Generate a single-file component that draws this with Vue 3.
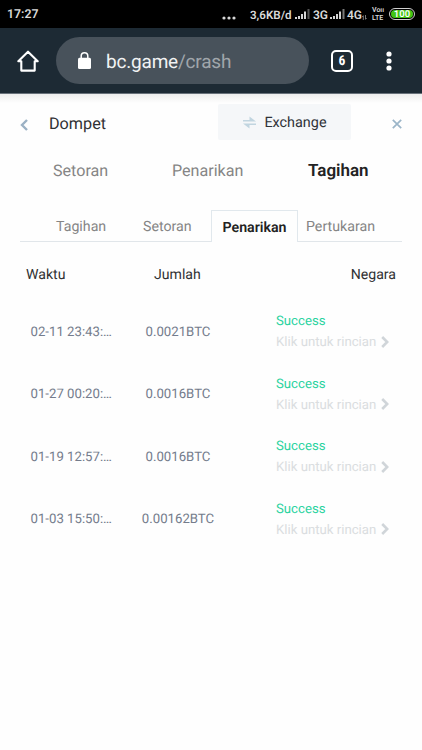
<script setup>
const mainTabs = ['Setoran', 'Penarikan', 'Tagihan']
const subTabs = ['Tagihan', 'Setoran', 'Penarikan', 'Pertukaran']
const rows = [
  { time: '02-11 23:43:…', amount: '0.0021BTC' },
  { time: '01-27 00:20:…', amount: '0.0016BTC' },
  { time: '01-19 12:57:…', amount: '0.0016BTC' },
  { time: '01-03 15:50:…', amount: '0.00162BTC' },
]
</script>

<template>
  <div class="screen">
    <div class="status">
      <span class="clock">17:27</span>
      <svg class="dots" width="14" height="4" viewBox="0 0 14 4" fill="#d8d8d8">
        <circle cx="2" cy="2" r="1.6" /><circle cx="7" cy="2" r="1.6" /><circle cx="12" cy="2" r="1.6" />
      </svg>
      <span class="speed">3,6KB/d</span>
      <svg class="signal" width="15" height="12" viewBox="0 0 15 12" fill="#d4d4d4">
        <path d="M0 9h2v2H0zM3 8h2v3H3zM6 6h2v5H6zM9 3.5h2V11H9z" /><path d="M12.5 1h2v10h-2z" fill="#555" />
      </svg>
      <span class="net3">3G</span>
      <svg class="signal" width="15" height="12" viewBox="0 0 15 12" fill="#d4d4d4">
        <path d="M0 9h2v2H0zM3 8h2v3H3zM6 6h2v5H6zM9 3.5h2V11H9z" /><path d="M12.5 1h2v10h-2z" fill="#777" />
      </svg>
      <span class="net4">4G</span>
      <svg class="data" width="5" height="5" viewBox="0 0 5 5" fill="none" stroke="#999" stroke-width=".8">
        <path d="M1.3 5V.7L.2 2M3.5 0v4.3L4.7 3" />
      </svg>
      <span class="volte"><span>Voıı</span><span>LTE</span></span>
      <span class="battery"><span>100</span></span>
    </div>

    <div class="toolbar">
      <svg class="home" width="22" height="22" viewBox="0 0 22 22" fill="none" stroke="#fff" stroke-width="2.1" stroke-linejoin="round" stroke-linecap="round">
        <path d="M1.3 11.2 11 1.7l9.7 9.5h-3V20.6H4.3v-9.4z" />
      </svg>
      <div class="address">
        <svg width="13" height="17" viewBox="0 0 13 17">
          <path d="M3.2 7V4.1a3.3 3.3 0 0 1 6.6 0V7" fill="none" stroke="#fff" stroke-width="1.5" />
          <rect y="5.7" width="13" height="11.2" rx="1.5" fill="#fff" />
        </svg>
        <span class="url">bc.game<span>/crash</span></span>
      </div>
      <span class="tabcount">6</span>
      <svg class="more" width="6" height="20" viewBox="0 0 6 20" fill="#fff">
        <circle cx="3" cy="3" r="2.6" /><circle cx="3" cy="10" r="2.6" /><circle cx="3" cy="17" r="2.6" />
      </svg>
    </div>

    <main class="page">
      <header class="head">
        <svg class="back" width="8" height="12" viewBox="0 0 8 12" fill="none" stroke="#9bb1c4" stroke-width="2.4">
          <path d="M7 1 2 6l5 5" />
        </svg>
        <span class="title">Dompet</span>
        <div class="exchange">
          <svg width="13" height="13" viewBox="0 0 13 13" fill="#c1d5e0">
            <path d="M0 4h6.5V.5L13 5.4H0zM13 8.9H6.5v3.6L0 7.5h13z" />
          </svg>
          <span>Exchange</span>
        </div>
        <svg class="close" width="10" height="10" viewBox="0 0 10 10" fill="none" stroke="#9bb5c8" stroke-width="1.7">
          <path d="m.8.8 8.4 8.4M9.2.8.8 9.2" />
        </svg>
      </header>

      <nav class="main-tabs">
        <span v-for="tab in mainTabs" :key="tab" :class="{ active: tab === 'Tagihan' }">{{ tab }}</span>
      </nav>

      <nav class="sub-tabs">
        <span v-for="tab in subTabs" :key="tab" :class="{ active: tab === 'Penarikan' }">{{ tab }}</span>
      </nav>

      <div class="columns">
        <span>Waktu</span><span>Jumlah</span><span>Negara</span>
      </div>

      <div v-for="row in rows" :key="row.time" class="row">
        <span class="time">{{ row.time }}</span>
        <span class="amount">{{ row.amount }}</span>
        <div class="state">
          <span class="success">Success</span>
          <span class="detail">Klik untuk rincian
            <svg width="8" height="12" viewBox="0 0 8 12" fill="none" stroke="#d0d5d9" stroke-width="2.6">
              <path d="m1.2 1 5 5-5 5" />
            </svg>
          </span>
        </div>
      </div>
    </main>
  </div>
</template>

<style>
body {
  margin: 0;
  background: #fefefe;
}
</style>

<style scoped>
.screen {
  width: 422px;
  height: 750px;
  overflow: hidden;
  font-family: Roboto, sans-serif;
  text-rendering: geometricPrecision;
  white-space: nowrap;
  background: #fefefe;
}
svg { flex: none; display: block; }
.status {
  display: flex;
  align-items: center;
  height: 28px;
  box-sizing: border-box;
  padding-left: 7px;
  background: #000;
  color: #d8d8d8;
  font-size: 12px;
  font-weight: 600;
}
.clock { width: 215px; padding-top: 1px; font-size: 12.3px; }
.dots { margin-top: 8px; }
.speed { width: 45px; margin-left: 14px; padding-top: 1px; font-size: 11.6px; }
.signal { width: 15px; }
.net3 { width: 17px; margin-left: 3px; padding-top: 1px; }
.net4 { width: 15px; margin-left: 2px; padding-top: 1px; }
.data { margin: 6px 5px 0 0; }
.volte {
  display: flex;
  flex-direction: column;
  gap: 1px;
  width: 13px;
  font-size: 7px;
  line-height: 6px;
}
.volte span { height: 7px; line-height: 7px; }
.battery {
  display: flex;
  box-sizing: border-box;
  width: 26px;
  height: 12px;
  margin-left: 4px;
  padding: 1px;
  border: 1px solid #d0d0d0;
  border-radius: 6px;
}
.battery span {
  flex: 1;
  border-radius: 4px;
  background: #42c414;
  color: #fff;
  font-size: 9.5px;
  line-height: 9px;
  text-align: center;
}
.toolbar {
  display: flex;
  align-items: center;
  height: 65px;
  box-sizing: border-box;
  padding-left: 17px;
  background: #1d2a34;
}
.address {
  display: flex;
  align-items: center;
  box-sizing: border-box;
  width: 253px;
  height: 47px;
  margin-left: 17px;
  padding-left: 22px;
  border-radius: 24px;
  background: #48525b;
}
.url { margin-left: 15px; padding-top: 2px; color: #f1f2f3; font-size: 19px; letter-spacing: -.2px; }
.url span { color: #a0a6ab; }
.tabcount {
  box-sizing: border-box;
  width: 22px;
  height: 22px;
  margin-left: 22px;
  border: 2px solid #fff;
  border-radius: 5px;
  color: #fff;
  font-family: "Roboto Condensed", Roboto, sans-serif;
  font-size: 13.5px;
  font-weight: 700;
  line-height: 19px;
  text-align: center;
}
.more { margin-left: 33px; }
.page {
  height: 657px;
  box-sizing: border-box;
  border-top: 1px solid #68717a;
  background: linear-gradient(#ededed, #fefefe 9px);
}
.head {
  display: flex;
  align-items: center;
  height: 56px;
  padding: 0 20px;
}
.back { margin-top: 5px; }
.title { width: 170px; margin: 3px 0 0 21px; color: #303133; font-size: 16.2px; }
.exchange {
  display: flex;
  align-items: center;
  box-sizing: border-box;
  width: 133px;
  height: 36px;
  padding-left: 25px;
  border-radius: 2px;
  background: #f5f7f9;
  color: #303338;
  font-size: 14.4px;
}
.exchange span { margin-left: 8px; padding-top: 1px; }
.close { margin: 3px 0 0 41px; }
.main-tabs {
  display: flex;
  height: 41px;
  padding-left: 53px;
  color: #858585;
  font-size: 16.1px;
  line-height: 41px;
}
.main-tabs span:nth-child(1) { width: 119px; }
.main-tabs span:nth-child(2) { width: 136px; }
.main-tabs .active { color: #222; font-size: 17px; font-weight: 600; line-height: 43px; }
.sub-tabs {
  display: flex;
  align-items: stretch;
  box-sizing: border-box;
  width: 382px;
  height: 32px;
  margin: 19px 0 0 20px;
  color: #858585;
  font-size: 14.2px;
  line-height: 34px;
}
.sub-tabs span { box-sizing: border-box; border-bottom: 1px solid #e1e6ea; }
.sub-tabs span:nth-child(1) { width: 123px; padding-left: 36px; }
.sub-tabs span:nth-child(2) { width: 68px; }
.sub-tabs span:nth-child(4) { flex: 1; padding-left: 8px; }
.sub-tabs .active {
  width: 87px;
  border: 1px solid #e1e8ed;
  border-bottom: 0;
  color: #222;
  font-weight: 600;
  text-align: center;
}
.columns {
  display: grid;
  grid-template-columns: 128px 1fr auto;
  padding: 0 26px;
  margin-top: 23px;
  color: #303133;
  font-size: 14.1px;
  line-height: 20px;
}
.row {
  display: grid;
  grid-template-columns: 102px 91px 1fr;
  align-items: center;
  height: 42px;
  padding-left: 30.5px;
  margin-top: 20.6px;
  color: #747c8c;
  font-size: 13.2px;
}
.columns + .row { margin-top: 26px; }
.amount { text-align: center; }
.state { padding-left: 52.5px; line-height: 21px; }
.success { display: block; color: #2bd3a0; }
.detail { display: flex; align-items: center; gap: 5px; color: #dadde0; }
.detail svg { margin-top: -2px; }
</style>
